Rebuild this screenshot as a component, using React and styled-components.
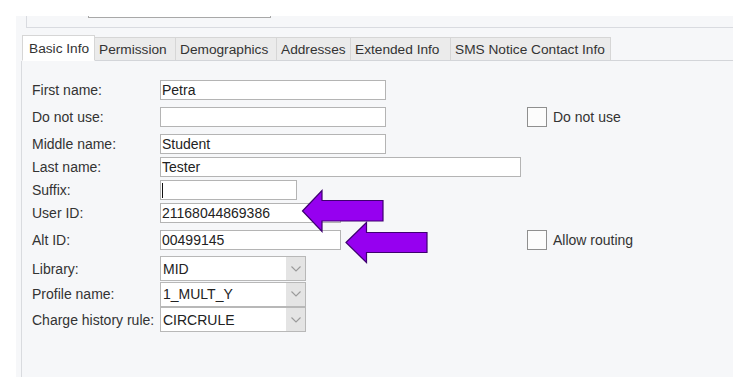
import React from 'react';
import styled, { createGlobalStyle } from 'styled-components';

const GlobalStyle = createGlobalStyle`
  html, body { margin: 0; padding: 0; background: #fff; }
  body { font-family: "Liberation Sans", Arial, sans-serif; color: #333; }
`;

const Page = styled.div`
  position: relative;
  width: 750px;
  height: 387px;
  overflow: hidden;
  background: #fff;
  padding: 16px 0 0 16px;
  box-sizing: border-box;
`;

const Panel = styled.div`
  width: 717px;
  height: 361px;
  background: #f6f7f9;
  display: flex;
  flex-direction: column;
`;

const TopStrip = styled.div`
  margin-left: 10px;
  height: 11px;
  border-left: 1px solid #d9dbe0;
  border-bottom: 1px solid #d9dbe0;
  display: flex;
  align-items: flex-start;
`;

const CutInput = styled.div`
  margin-left: 61px;
  width: 181px;
  height: 1px;
  border: 1px solid #a8a8a8;
  border-top: none;
  background: #fff;
`;

const TabBar = styled.div`
  margin-top: 7px;
  margin-left: 6px;
  height: 25px;
  display: flex;
  align-items: flex-end;
  border-bottom: 1px solid #d3d5d9;
`;

const Tab = styled.div`
  box-sizing: border-box;
  width: ${p => p.$w}px;
  height: ${p => (p.$active ? 26 : 24)}px;
  margin-bottom: -1px;
  padding: 0 0 0 ${p => (p.$active ? 6 : 4)}px;
  display: flex;
  align-items: center;
  font-size: 13.7px;
  color: #333;
  white-space: nowrap;
  background: ${p => (p.$active ? '#fff' : '#ebebeb')};
  border-top: 1px solid #d6d6d6;
  border-right: 1px solid #d6d6d6;
  border-left: ${p => (p.$first ? '1px solid #d6d6d6' : 'none')};
  border-bottom: 1px solid ${p => (p.$active ? '#fff' : '#d3d5d9')};
`;

const Content = styled.div`
  flex: 1;
  margin-left: 5px;
  border-left: 1px solid #d9dbdf;
  padding: 19px 0 0 10px;
  display: flex;
  flex-direction: column;
`;

const Row = styled.div`
  display: flex;
  align-items: center;
  margin-top: ${p => p.$mt || 0}px;
`;

const Label = styled.div`
  width: 128px;
  font-size: 14px;
  color: #333;
  white-space: nowrap;
`;

const FieldCell = styled.div`
  width: 367px;
  display: flex;
  align-items: center;
`;

const TextBox = styled.div`
  box-sizing: border-box;
  width: ${p => p.$w}px;
  height: 20px;
  border: 1px solid #b4b4b4;
  background: #fff;
  padding-left: 1px;
  display: flex;
  align-items: center;
  font-size: 14px;
  color: #222;
  white-space: nowrap;
  overflow: hidden;
`;

const Caret = styled.span`
  display: inline-block;
  width: 1px;
  height: 15px;
  background: #111;
`;

const SelectBox = styled.div`
  box-sizing: border-box;
  width: 146px;
  height: 25px;
  border: 1px solid #b8b8b8;
  display: flex;
  background: #fff;
`;

const SelectValue = styled.div`
  flex: 1;
  padding-left: 2px;
  display: flex;
  align-items: center;
  font-size: 14px;
  color: #222;
`;

const SelectArrow = styled.div`
  width: 19px;
  background: #e4e4e4;
  display: flex;
  align-items: center;
  justify-content: center;
`;

const CheckWrap = styled.div`
  display: flex;
  align-items: center;
  gap: 6px;
  font-size: 14px;
  color: #333;
`;

const CheckBox = styled.div`
  box-sizing: border-box;
  width: 20px;
  height: 20px;
  border: 1px solid #8f8f8f;
  background: #fcfcfc;
`;

const Overlay = styled.svg`
  position: absolute;
  left: 0;
  top: 0;
  pointer-events: none;
`;

const Chevron = () => (
  <svg width="10" height="6" viewBox="0 0 10 6">
    <polyline points="0.5,0.5 5,5 9.5,0.5" fill="none" stroke="#9a9a9a" strokeWidth="1.1" />
  </svg>
);

const Select = ({ value }) => (
  <SelectBox>
    <SelectValue>{value}</SelectValue>
    <SelectArrow><Chevron /></SelectArrow>
  </SelectBox>
);

const Check = ({ label }) => (
  <CheckWrap>
    <CheckBox />
    <span>{label}</span>
  </CheckWrap>
);

const tabs = [
  { t: 'Basic Info', w: 73 },
  { t: 'Permission', w: 81 },
  { t: 'Demographics', w: 101 },
  { t: 'Addresses', w: 74 },
  { t: 'Extended Info', w: 100 },
  { t: 'SMS Notice Contact Info', w: 160 },
];

export default function App() {
  return (
    <>
      <GlobalStyle />
      <Page>
        <Panel>
          <TopStrip>
            <CutInput />
          </TopStrip>
          <TabBar>
            {tabs.map((tb, i) => (
              <Tab key={tb.t} $w={tb.w} $active={i === 0} $first={i === 0}>
                {tb.t}
              </Tab>
            ))}
          </TabBar>
          <Content>
            <Row>
              <Label>First name:</Label>
              <FieldCell><TextBox $w={226}>Petra</TextBox></FieldCell>
            </Row>
            <Row $mt={7}>
              <Label>Do not use:</Label>
              <FieldCell><TextBox $w={226} /></FieldCell>
              <Check label="Do not use" />
            </Row>
            <Row $mt={7}>
              <Label>Middle name:</Label>
              <FieldCell><TextBox $w={226}>Student</TextBox></FieldCell>
            </Row>
            <Row $mt={3}>
              <Label>Last name:</Label>
              <FieldCell><TextBox $w={361}>Tester</TextBox></FieldCell>
            </Row>
            <Row $mt={3}>
              <Label>Suffix:</Label>
              <FieldCell><TextBox $w={137}><Caret /></TextBox></FieldCell>
            </Row>
            <Row $mt={3}>
              <Label>User ID:</Label>
              <FieldCell><TextBox $w={181}>21168044869386</TextBox></FieldCell>
            </Row>
            <Row $mt={7}>
              <Label>Alt ID:</Label>
              <FieldCell><TextBox $w={181}>00499145</TextBox></FieldCell>
              <Check label="Allow routing" />
            </Row>
            <Row $mt={6}>
              <Label>Library:</Label>
              <FieldCell><Select value="MID" /></FieldCell>
            </Row>
            <Row $mt={0.5}>
              <Label>Profile name:</Label>
              <FieldCell><Select value="1_MULT_Y" /></FieldCell>
            </Row>
            <Row $mt={0.5}>
              <Label>Charge history rule:</Label>
              <FieldCell><Select value="CIRCRULE" /></FieldCell>
            </Row>
          </Content>
        </Panel>
        <Overlay width="750" height="387" viewBox="0 0 750 387">
          <polygon
            points="302.5,211 322,190.5 322,200.5 383,200.5 383,221 322,221 322,231.5"
            fill="#9600f0"
            stroke="#3e0070"
            strokeWidth="1.2"
            strokeLinejoin="miter"
          />
          <polygon
            points="346,242.5 366.5,222.5 366.5,232.5 427,232.5 427,252.5 366.5,252.5 366.5,262.5"
            fill="#9600f0"
            stroke="#3e0070"
            strokeWidth="1.2"
            strokeLinejoin="miter"
          />
        </Overlay>
      </Page>
    </>
  );
}
